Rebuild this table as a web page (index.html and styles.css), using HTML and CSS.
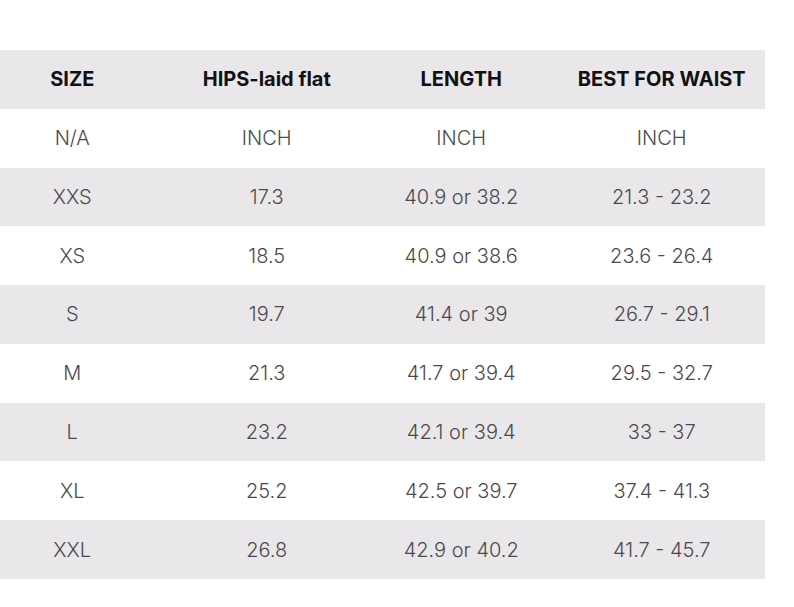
FILE: index.html
```html
<!DOCTYPE html>
<html>
<head>
<meta charset="utf-8">
<link rel="stylesheet" href="styles.css">
</head>
<body>
<div class="table">
  <div class="row head"><div class="c c1">SIZE</div><div class="c">HIPS-laid flat</div><div class="c">LENGTH</div><div class="c">BEST FOR WAIST</div></div>
  <div class="row"><div class="c c1">N/A</div><div class="c">INCH</div><div class="c">INCH</div><div class="c">INCH</div></div>
  <div class="row alt"><div class="c c1">XXS</div><div class="c">17.3</div><div class="c">40.9 or 38.2</div><div class="c">21.3 - 23.2</div></div>
  <div class="row"><div class="c c1">XS</div><div class="c">18.5</div><div class="c">40.9 or 38.6</div><div class="c">23.6 - 26.4</div></div>
  <div class="row alt"><div class="c c1">S</div><div class="c">19.7</div><div class="c">41.4 or 39</div><div class="c">26.7 - 29.1</div></div>
  <div class="row"><div class="c c1">M</div><div class="c">21.3</div><div class="c">41.7 or 39.4</div><div class="c">29.5 - 32.7</div></div>
  <div class="row alt"><div class="c c1">L</div><div class="c">23.2</div><div class="c">42.1 or 39.4</div><div class="c">33 - 37</div></div>
  <div class="row"><div class="c c1">XL</div><div class="c">25.2</div><div class="c">42.5 or 39.7</div><div class="c">37.4 - 41.3</div></div>
  <div class="row alt"><div class="c c1">XXL</div><div class="c">26.8</div><div class="c">42.9 or 40.2</div><div class="c">41.7 - 45.7</div></div>
</div>
</body>
</html>
```
FILE: styles.css
```css
html, body {
  margin: 0;
  padding: 0;
  background: #ffffff;
}
body {
  padding-top: 50px;
  font-family: Inter, "Noto Sans", sans-serif;
}
.table {
  width: 765px;
  display: grid;
  grid-template-rows: repeat(9, 58.78px);
}
.row {
  display: grid;
  grid-template-columns: 169.5px 194.5px 194.5px 206.5px;
  align-items: center;
  font-size: 20px;
  font-weight: 300;
  color: #4a4a4e;
}
.row.head, .row.alt {
  background: #e9e7ea;
}
.row.head {
  font-weight: 700;
  color: #111113;
}
.c {
  text-align: center;
}
.c1 {
  padding-right: 25px;
}
```
